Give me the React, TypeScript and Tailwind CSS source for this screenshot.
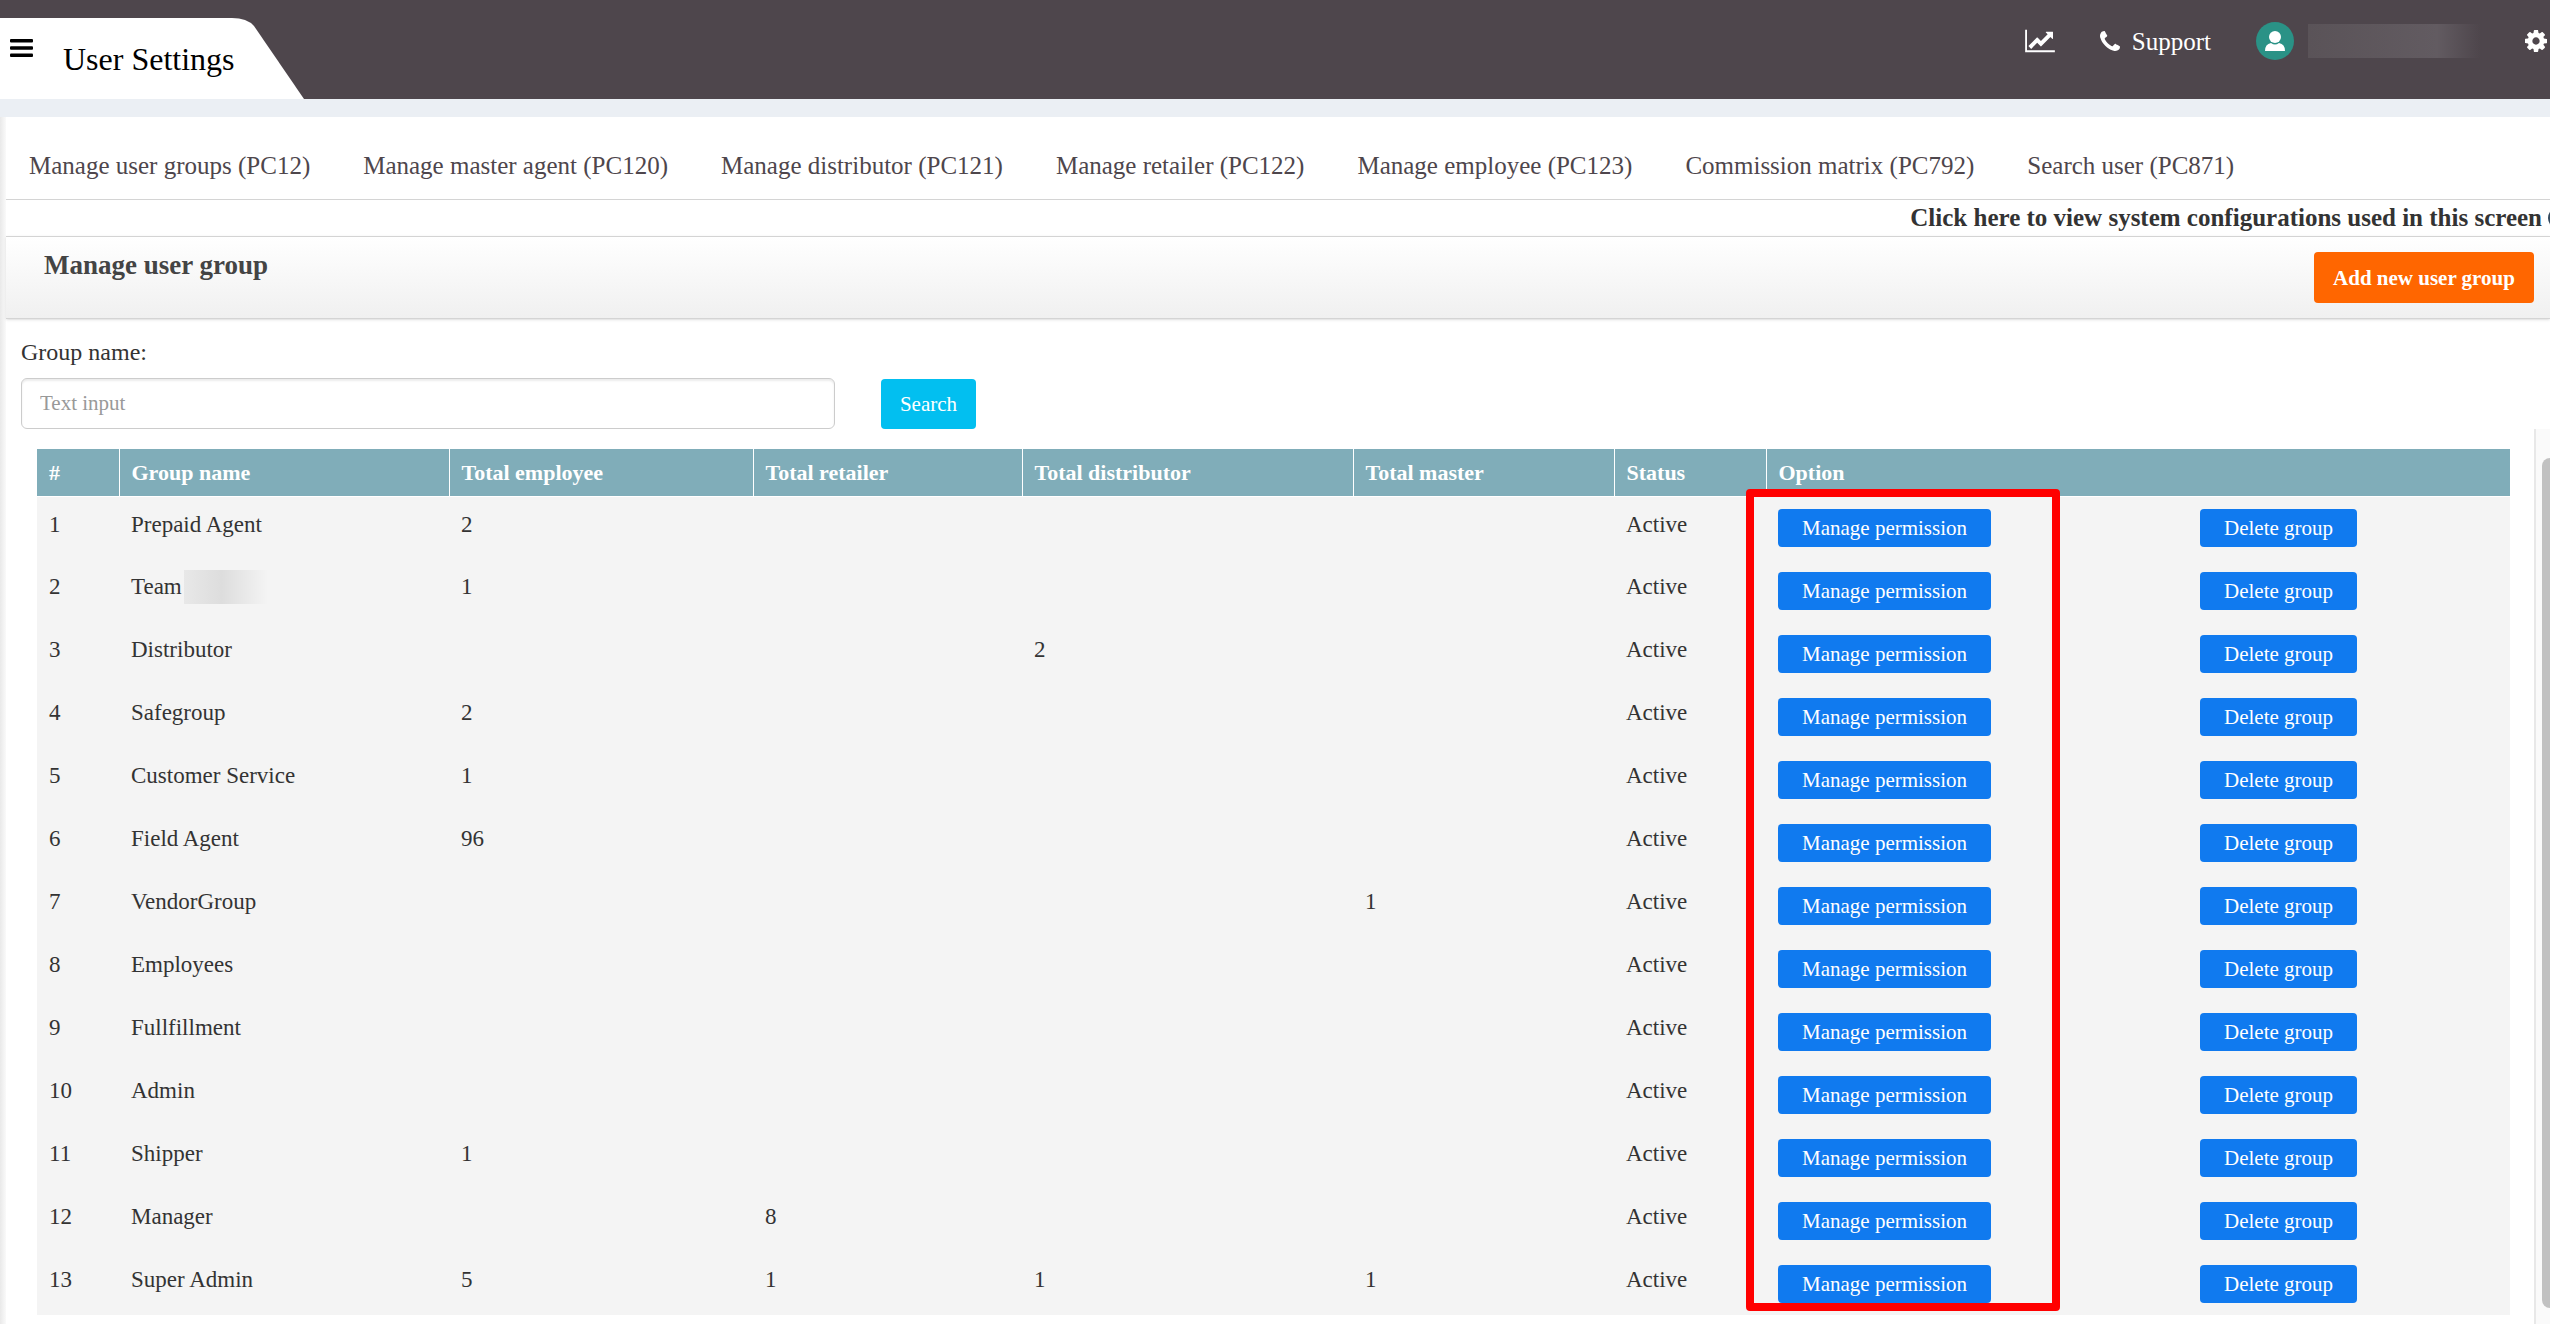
import React from "react";

type Group = {
  name: string;
  employee?: number;
  retailer?: number;
  distributor?: number;
  master?: number;
  masked?: boolean;
};

const groups: Group[] = [
  { name: "Prepaid Agent", employee: 2 },
  { name: "Team", employee: 1, masked: true },
  { name: "Distributor", distributor: 2 },
  { name: "Safegroup", employee: 2 },
  { name: "Customer Service", employee: 1 },
  { name: "Field Agent", employee: 96 },
  { name: "VendorGroup", master: 1 },
  { name: "Employees" },
  { name: "Fullfillment" },
  { name: "Admin" },
  { name: "Shipper", employee: 1 },
  { name: "Manager", retailer: 8 },
  { name: "Super Admin", employee: 5, retailer: 1, distributor: 1, master: 1 },
];

const navItems = [
  "Manage user groups (PC12)",
  "Manage master agent (PC120)",
  "Manage distributor (PC121)",
  "Manage retailer (PC122)",
  "Manage employee (PC123)",
  "Commission matrix (PC792)",
  "Search user (PC871)",
];

const columns = [
  "#",
  "Group name",
  "Total employee",
  "Total retailer",
  "Total distributor",
  "Total master",
  "Status",
];

function ChartIcon() {
  return (
    <svg viewBox="0 0 2048 1792" className="h-[26px] w-[30px] fill-white" aria-hidden="true">
      <path d="M2048 1536v128h-2048v-1536h128v1408h1920zm-128-1248v435q0 21-19.5 29.5t-35.5-7.5l-121-121-633 633q-10 10-23 10t-23-10l-233-233-416 416-192-192 585-585q10-10 23-10t23 10l233 233 464-464-121-121q-16-16-7.5-35.5t29.5-19.5h435q14 0 23 9t9 23z" />
    </svg>
  );
}

function PhoneIcon() {
  return (
    <svg viewBox="192 128 1408 1408" className="size-5 fill-white" aria-hidden="true">
      <path d="M1600 1240q0 27-10 70.5t-21 68.5q-21 50-122 106-94 51-186 51-27 0-53-3.5t-57.5-12.5-47-14.5-55.5-20.5-49-18q-98-35-175-83-127-79-264-216t-216-264q-48-77-83-175-3-9-18-49t-20.5-55.5-14.5-47-12.5-57.5-3.5-53q0-92 51-186 56-101 106-122 25-11 68.5-21t70.5-10q14 0 21 3 18 6 53 76 11 19 30 54t35 63.5 31 53.5q3 4 17.5 25t21.5 35.5 7 28.5q0 20-28.5 50t-62 55-62 53-28.5 46q0 9 5 22.5t8.5 20.5 14 24 11.5 19q76 137 174 235t235 174q2 1 19 11.5t24 14 20.5 8.5 22.5 5q18 0 46-28.5t53-62 55-62 50-28.5q14 0 28.5 7t35.5 21.5 25 17.5q25 15 53.5 31t63.5 35 54 30q70 35 76 53 3 7 3 21z" />
    </svg>
  );
}

function CogIcon() {
  return (
    <svg viewBox="128 128 1536 1536" className="size-[22px] fill-white" aria-hidden="true">
      <path d="M1152 896q0-106-75-181t-181-75-181 75-75 181 75 181 181 75 181-75 75-181zm512-109v222q0 12-8 23t-20 13l-185 28q-19 54-39 91 35 50 107 138 10 12 10 25t-9 23q-27 37-99 108t-94 71q-12 0-26-9l-138-108q-44 23-91 38-16 136-29 186-7 28-36 28h-222q-14 0-24.5-8.5t-11.5-21.5l-28-184q-49-16-90-37l-141 107q-10 9-25 9-14 0-25-11-126-114-165-168-7-10-7-23 0-12 8-23 15-21 51-66.5t54-70.5q-27-50-41-99l-183-27q-13-2-21-12.5t-8-23.5v-222q0-12 8-23t19-13l186-28q14-46 39-92-40-57-107-138-10-12-10-24 0-10 9-23 26-36 98.5-107.5t94.5-71.5q13 0 26 10l138 107q44-23 91-38 16-136 29-186 7-28 36-28h222q14 0 24.5 8.5t11.5 21.5l28 184q49 16 90 37l142-107q9-9 24-9 13 0 25 10 129 119 165 170 7 8 7 22 0 12-8 23-15 21-51 66.5t-54 70.5q26 50 41 98l183 28q13 2 21 12.5t8 23.5z" />
    </svg>
  );
}

function Header() {
  return (
    <header className="flex h-[99px] items-end justify-between bg-[#4e464c]">
      <div className="relative h-[81px] w-[304px]">
        <svg viewBox="0 0 304 81" className="absolute inset-0 size-full" aria-hidden="true">
          <path d="M0 0H232Q247 0 254 8L304 81H0Z" fill="#fff" />
        </svg>
        <div className="relative flex items-start gap-[30px] pl-[10px]">
          <button type="button" aria-label="Menu" className="mt-[21px]">
            <svg viewBox="0 0 23 18" className="h-[18px] w-[23px]" aria-hidden="true">
              <rect width="23" height="3.5" rx="1" />
              <rect y="7.3" width="23" height="3.5" rx="1" />
              <rect y="14.5" width="23" height="3.5" rx="1" />
            </svg>
          </button>
          <h1 className="mt-[23px] text-[32px] leading-9 text-black">User Settings</h1>
        </div>
      </div>
      <div className="flex h-full items-start pt-[22px] pr-[3px] text-white">
        <div className="flex h-[38px] items-center">
          <a href="#reports" aria-label="Reports">
            <ChartIcon />
          </a>
          <a href="#support" className="ml-[45px] flex items-center gap-3 text-[25px]">
            <PhoneIcon />
            <span className="pt-[2px]">Support</span>
          </a>
          <button type="button" aria-label="Account" className="ml-[45px] flex items-center gap-[14px]">
            <svg viewBox="0 0 38 38" className="size-[38px]" aria-hidden="true">
              <circle cx="19" cy="19" r="19" fill="#2a9286" />
              <circle cx="19" cy="15" r="6" fill="#fff" />
              <path d="M9 29Q9 22 15 21Q19 24 23 21Q29 22 29 29Z" fill="#fff" />
            </svg>
            <span className="h-[34px] w-[172px] bg-linear-to-r from-[#5a5358] via-[#625b61] via-75% to-[#4e464c]" />
          </button>
          <button type="button" aria-label="Settings" className="ml-[45px]">
            <CogIcon />
          </button>
        </div>
      </div>
    </header>
  );
}

function GroupTable() {
  const cell = "px-3 pt-4 align-top";
  const action =
    "block h-[38px] rounded-[4px] bg-[#107aef] px-6 text-[21px] leading-[38px] whitespace-nowrap text-white";
  return (
    <div className="relative">
      <table className="w-full table-fixed border-collapse text-left text-[23px] leading-6 text-[#333]">
        <colgroup>
          <col className="w-[82px]" />
          <col className="w-[330px]" />
          <col className="w-[304px]" />
          <col className="w-[269px]" />
          <col className="w-[331px]" />
          <col className="w-[261px]" />
          <col className="w-[152px]" />
          <col className="w-[422px]" />
          <col />
        </colgroup>
        <thead>
          <tr className="h-[47px] border-b border-white bg-[#80adb9] text-[22px] text-white">
            {columns.map((c) => (
              <th key={c} scope="col" className="border-r border-white px-3 pt-[2px] font-bold">
                {c}
              </th>
            ))}
            <th scope="col" colSpan={2} className="px-3 pt-[2px] font-bold">
              Option
            </th>
          </tr>
        </thead>
        <tbody>
          {groups.map((g, i) => (
            <tr key={g.name} className="h-[63px] bg-[#f4f4f4]">
              <td className={cell}>{i + 1}</td>
              <td className={cell}>
                <span className="flex h-6 items-center gap-[2px]">
                  {g.name}
                  {g.masked && (
                    <span className="h-[34px] w-[84px] bg-linear-to-r from-[#e8e8e8] via-[#dddddd] via-45% to-[#f4f4f4]" />
                  )}
                </span>
              </td>
              <td className={cell}>{g.employee}</td>
              <td className={cell}>{g.retailer}</td>
              <td className={cell}>{g.distributor}</td>
              <td className={cell}>{g.master}</td>
              <td className={cell}>Active</td>
              <td className="px-3">
                <button type="button" className={action}>
                  Manage permission
                </button>
              </td>
              <td className="px-3">
                <button type="button" className={action}>
                  Delete group
                </button>
              </td>
            </tr>
          ))}
        </tbody>
      </table>
      <div className="pointer-events-none absolute top-10 bottom-1 left-[1709px] w-[314px] rounded-[4px] border-8 border-[#ff0000]" />
    </div>
  );
}

export default function App() {
  return (
    <div className="min-h-screen overflow-hidden bg-white font-['Liberation_Serif','Times_New_Roman',serif] text-[#333]">
      <Header />
      <div className="h-[18px] bg-[#ebeff4]" />
      <div className="flex">
        <div className="w-[6px] shrink-0 bg-linear-to-r from-[#e9e9e9] to-[#fafafa]" />
        <main className="min-w-0 flex-1">
          <nav className="flex h-[83px] items-center gap-[53px] border-b border-[#d4d4d4] pt-4 pl-[23px] text-[25px] whitespace-nowrap text-[#4e464c]">
            {navItems.map((item) => (
              <a key={item} href="#">
                {item}
              </a>
            ))}
          </nav>
          <div className="flex h-9 items-center justify-end overflow-hidden">
            <a href="#config" className="-mr-5 flex shrink-0 items-center gap-[6px] text-[25px] font-bold">
              Click here to view system configurations used in this screen
              <svg viewBox="0 0 22 22" className="size-[22px]" aria-hidden="true">
                <circle cx="11" cy="11" r="11" fill="#34495e" />
              </svg>
            </a>
          </div>
          <div className="flex h-[83px] items-start justify-between border-y border-[#d4d4d4] bg-linear-to-b from-white to-[#f0f0f0] pr-4 pl-[38px] shadow-sm">
            <h2 className="mt-3 text-[27px] leading-8 font-bold text-[#444]">Manage user group</h2>
            <button
              type="button"
              className="mt-[15px] h-[51px] w-[220px] rounded-[4px] bg-[#ff6600] pt-[2px] text-[21px] font-bold text-white"
            >
              Add new user group
            </button>
          </div>
          <form className="flex h-[110px] items-end pl-[15px]" onSubmit={(e) => e.preventDefault()}>
            <div className="flex w-[814px] flex-col">
              <label htmlFor="group-name" className="mb-3 text-2xl leading-7">
                Group name:
              </label>
              <input
                id="group-name"
                type="text"
                placeholder="Text input"
                className="h-[51px] w-full rounded-[6px] border border-[#ccc] px-[18px] text-[21px] shadow-[inset_0_2px_2px_rgba(0,0,0,0.08)] placeholder:text-[#999]"
              />
            </div>
            <button
              type="submit"
              className="ml-[46px] h-[50px] w-[95px] rounded-[4px] bg-[#02bff0] pt-[2px] text-[21px] text-white"
            >
              Search
            </button>
          </form>
          <div className="flex">
            <div className="min-w-0 flex-1 pt-5 pr-6 pb-[10px] pl-[31px]">
              <GroupTable />
            </div>
            <div className="flex w-4 shrink-0 justify-end border-l-2 border-[#e8e8e8] bg-[#fafafa] pt-[29px] pb-[17px]">
              <div className="w-2 rounded-l-[8px] bg-[#c1c1c1]" />
            </div>
          </div>
        </main>
      </div>
    </div>
  );
}
